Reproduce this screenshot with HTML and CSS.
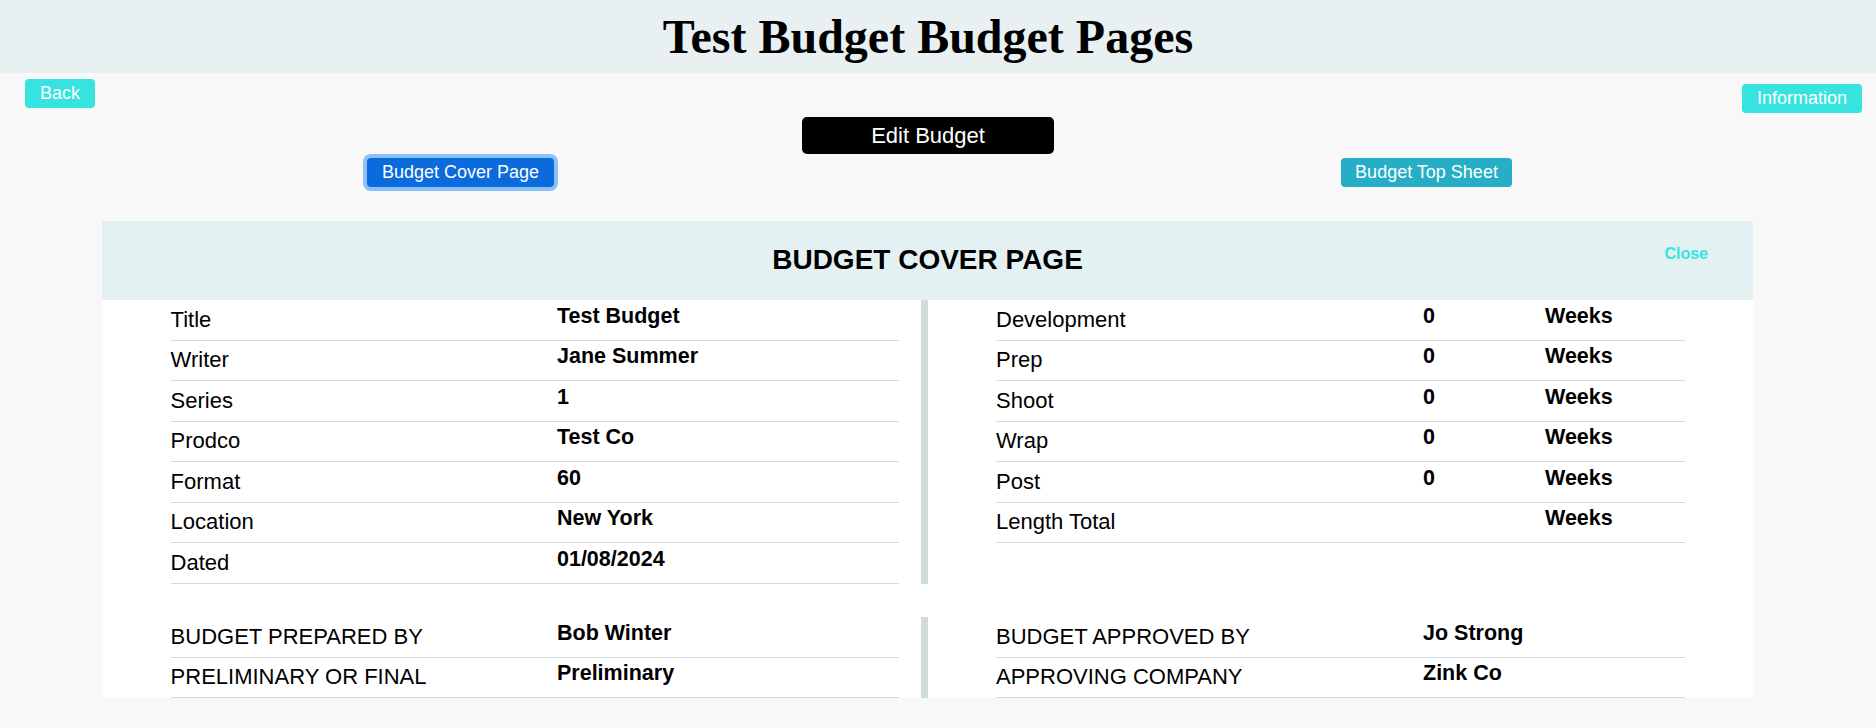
FILE: index.html
```html
<!DOCTYPE html>
<html lang="en">
<head>
<meta charset="utf-8">
<title>Test Budget Budget Pages</title>
<link rel="stylesheet" href="styles.css">
</head>
<body>
<header class="site-header">
  <h1 class="site-title">Test Budget Budget Pages</h1>
</header>
<main class="page">
  <div class="topbar">
    <button class="btn btn-aqua">Back</button>
    <button class="btn btn-aqua btn-info-top">Information</button>
  </div>
  <div class="edit-row">
    <button class="btn-edit">Edit Budget</button>
  </div>
  <div class="tabs">
    <button class="btn btn-primary-focus">Budget Cover Page</button>
    <button class="btn btn-teal">Budget Top Sheet</button>
  </div>

  <section class="card">
    <div class="card-header">
      <h2 class="card-title">BUDGET COVER PAGE</h2>
      <span class="close-link">Close</span>
    </div>

    <div class="section">
      <div class="col col-left">
        <div class="row"><span class="label">Title</span><span class="value">Test Budget</span></div>
        <div class="row"><span class="label">Writer</span><span class="value">Jane Summer</span></div>
        <div class="row"><span class="label">Series</span><span class="value">1</span></div>
        <div class="row"><span class="label">Prodco</span><span class="value">Test Co</span></div>
        <div class="row"><span class="label">Format</span><span class="value">60</span></div>
        <div class="row"><span class="label">Location</span><span class="value">New York</span></div>
        <div class="row"><span class="label">Dated</span><span class="value">01/08/2024</span></div>
      </div>
      <div class="col col-right">
        <div class="row row-3"><span class="label">Development</span><span class="value">0</span><span class="value">Weeks</span></div>
        <div class="row row-3"><span class="label">Prep</span><span class="value">0</span><span class="value">Weeks</span></div>
        <div class="row row-3"><span class="label">Shoot</span><span class="value">0</span><span class="value">Weeks</span></div>
        <div class="row row-3"><span class="label">Wrap</span><span class="value">0</span><span class="value">Weeks</span></div>
        <div class="row row-3"><span class="label">Post</span><span class="value">0</span><span class="value">Weeks</span></div>
        <div class="row row-3"><span class="label">Length Total</span><span class="value"></span><span class="value">Weeks</span></div>
      </div>
    </div>

    <div class="section section-2">
      <div class="col col-left">
        <div class="row"><span class="label">BUDGET PREPARED BY</span><span class="value">Bob Winter</span></div>
        <div class="row"><span class="label">PRELIMINARY OR FINAL</span><span class="value">Preliminary</span></div>
      </div>
      <div class="col col-right">
        <div class="row row-2r"><span class="label">BUDGET APPROVED BY</span><span class="value">Jo Strong</span></div>
        <div class="row row-2r"><span class="label">APPROVING COMPANY</span><span class="value">Zink Co</span></div>
      </div>
    </div>
  </section>
</main>
</body>
</html>
```

FILE: styles.css
```css
html, body {
  margin: 0;
  padding: 0;
}
body {
  background: #f8f8f8;
  font-family: "Liberation Sans", Arial, sans-serif;
  color: #000;
}

.site-header {
  height: 73px;
  background: #e8f0f2;
  display: flex;
  justify-content: center;
  padding-right: 20px;
}
.site-title {
  margin: 0;
  font-family: "Liberation Serif", "Times New Roman", serif;
  font-weight: 700;
  font-size: 48px;
  line-height: 73px;
  color: #000;
  letter-spacing: 0;
}

.page {
  width: 1856px;
}

.btn {
  height: 29px;
  padding: 0 15px;
  border: none;
  border-radius: 4px;
  font-family: "Liberation Sans", Arial, sans-serif;
  font-size: 18px;
  line-height: 29px;
  color: #fff;
  cursor: pointer;
}
.btn-aqua {
  background: #36e3df;
}
.btn-teal {
  background: #25aec6;
  padding: 0 14px;
}
.btn-primary-focus {
  background: #0b6bdc;
  box-shadow: 0 0 0 4px #8dc0f6;
  padding: 0 15px;
}

.topbar {
  display: flex;
  justify-content: space-between;
  align-items: flex-start;
  padding: 6px 0 0 25px;
  width: 1876px;
  box-sizing: border-box;
  padding-right: 14px;
}
.btn-info-top {
  margin-top: 5px;
}

.edit-row {
  display: flex;
  justify-content: center;
  margin-top: 4px;
}
.btn-edit {
  width: 252px;
  height: 37px;
  border: none;
  border-radius: 5px;
  background: #000;
  color: #fff;
  font-family: "Liberation Sans", Arial, sans-serif;
  font-size: 22px;
  line-height: 37px;
  padding: 0;
}

.tabs {
  display: flex;
  align-items: center;
  gap: 787px;
  padding-left: 367px;
  margin-top: 4px;
}

.card {
  margin: 34px 103px 0 102px;
  height: 477px;
  overflow: hidden;
  background: #fff;
}
.card-header {
  position: relative;
  height: 79px;
  background: #e3f1f3;
  text-align: center;
}
.card-title {
  margin: 0;
  font-size: 28px;
  font-weight: 700;
  line-height: 78px;
}
.close-link {
  position: absolute;
  right: 45px;
  top: 24px;
  font-size: 16px;
  font-weight: 700;
  line-height: 18px;
  color: #36e3df;
  cursor: pointer;
}

.section {
  display: flex;
}
.section-2 {
  margin-top: 33.5px;
}
.col {
  box-sizing: border-box;
}
.col-left {
  width: 819px;
  padding: 0 22px 0 68.6px;
}
.col-right {
  width: 832px;
  border-left: 7px solid #d0dcdc;
  padding: 0 68px 0 68px;
}

.row {
  display: grid;
  grid-template-columns: 386.4px 1fr;
  height: 40.5px;
  box-sizing: border-box;
  border-bottom: 1px solid #d4dddd;
}
.row-3 {
  grid-template-columns: 427px 122px 1fr;
}
.row-2r {
  grid-template-columns: 427px 1fr;
}
.label {
  font-size: 22px;
  line-height: 25px;
  padding-top: 6.5px;
  white-space: nowrap;
}
.value {
  font-size: 21.5px;
  font-weight: 700;
  line-height: 25px;
  padding-top: 3.5px;
  white-space: nowrap;
}
```
